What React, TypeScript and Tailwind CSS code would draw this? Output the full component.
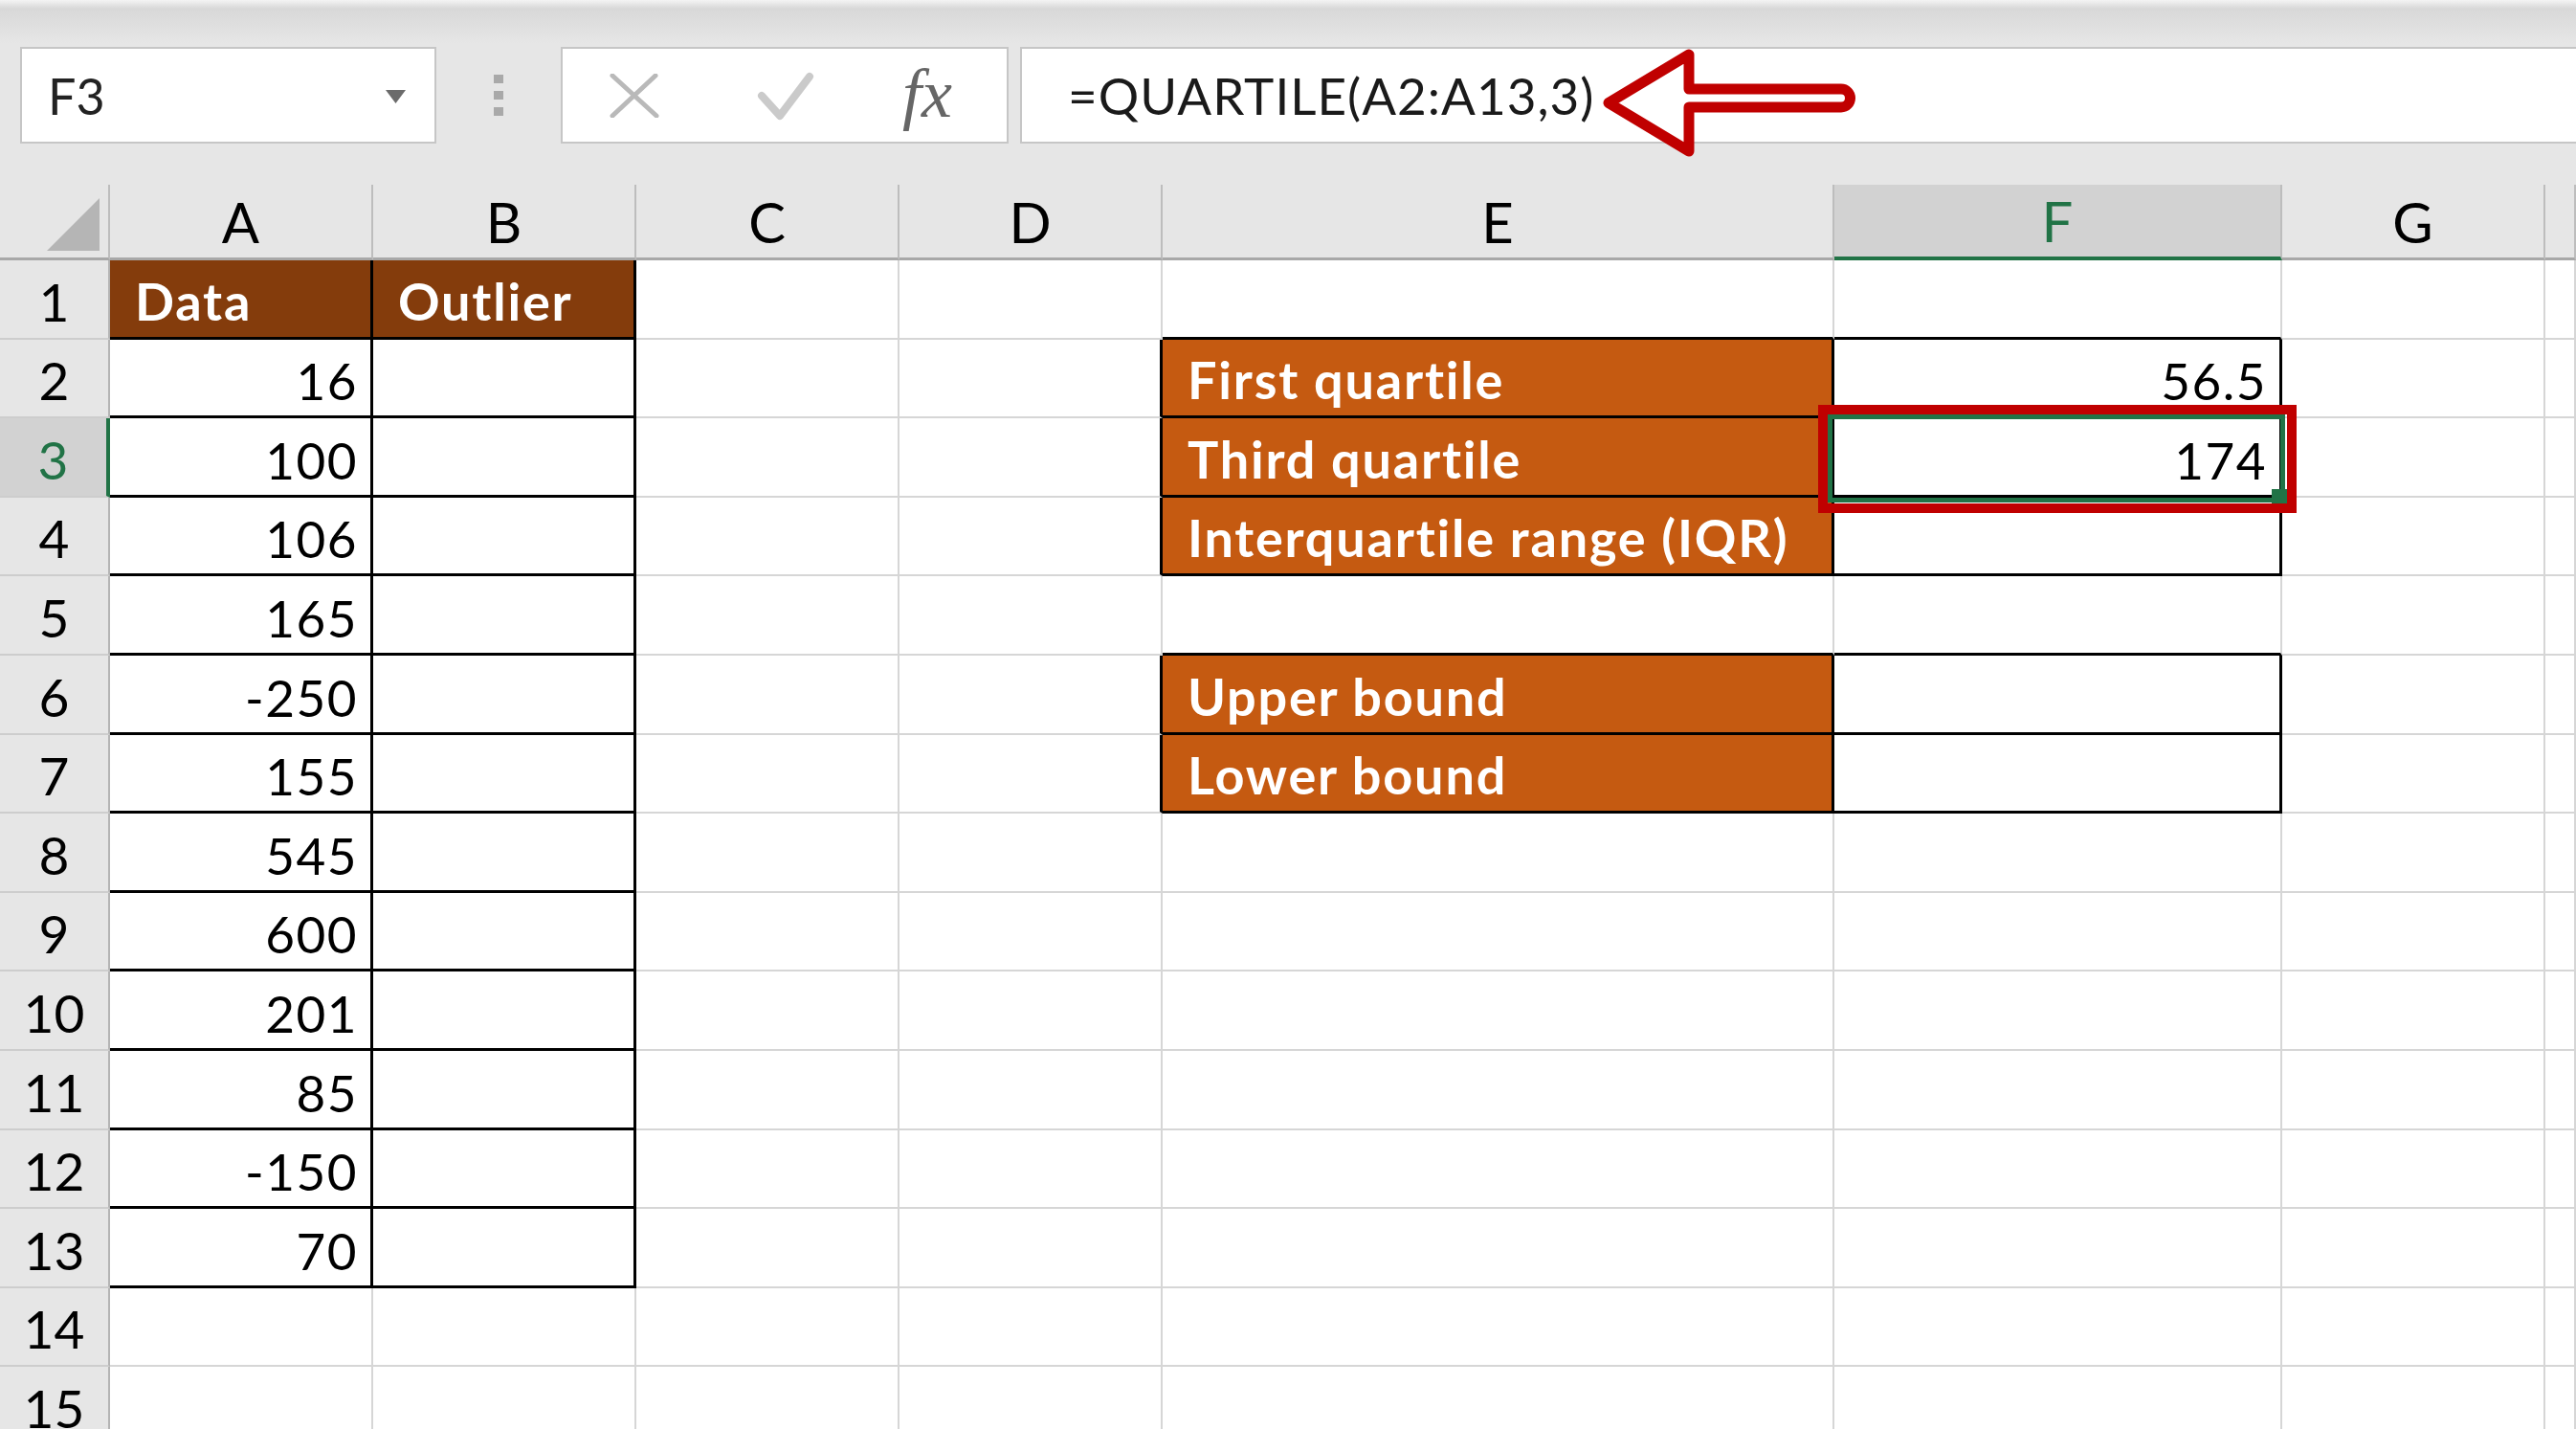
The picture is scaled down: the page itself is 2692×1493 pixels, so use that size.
import clsx from "clsx";

type Fill = "dark" | "orange";
type Cell = { v: string; fill?: Fill };

const COLS = ["A", "B", "C", "D", "E", "F", "G", ""];
const ROW_COUNT = 15;
// column F, row 3 is the active cell
const ACTIVE_COL = 5;
const ACTIVE_ROW = 3;

const cells: Record<string, Cell> = {
  A1: { v: "Data", fill: "dark" },
  B1: { v: "Outlier", fill: "dark" },
  E2: { v: "First quartile", fill: "orange" },
  F2: { v: "56.5" },
  E3: { v: "Third quartile", fill: "orange" },
  F3: { v: "174" },
  E4: { v: "Interquartile range (IQR)", fill: "orange" },
  E6: { v: "Upper bound", fill: "orange" },
  E7: { v: "Lower bound", fill: "orange" },
};
["16", "100", "106", "165", "-250", "155", "545", "600", "201", "85", "-150", "70"].forEach(
  (v, i) => {
    cells[`A${i + 2}`] = { v };
  },
);

// ranges that carry "all borders"
const inBox = (c: number, r: number) =>
  (c >= 0 && c <= 1 && r >= 1 && r <= 13) ||
  (c >= 4 && c <= 5 && r >= 2 && r <= 4) ||
  (c >= 4 && c <= 5 && r >= 6 && r <= 7);

const isNumber = (v: string) => /^-?[\d.]+$/.test(v);

function GridCell({ c, r }: { c: number; r: number }) {
  const cell = cells[`${COLS[c]}${r}`];
  const rightBlack = inBox(c, r) || inBox(c + 1, r);
  const bottomBlack = inBox(c, r) || inBox(c, r + 1);
  const numeric = cell ? isNumber(cell.v) : false;
  const active = c === ACTIVE_COL && r === ACTIVE_ROW;

  return (
    <div
      className={clsx(
        "flex items-end leading-none pb-[10px] whitespace-nowrap",
        active && "relative z-10",
        rightBlack ? "border-r-[3px] border-r-black" : "border-r-2 border-r-[#d6d6d6]",
        bottomBlack ? "border-b-[3px] border-b-black" : "border-b-2 border-b-[#d6d6d6]",
        numeric ? "justify-end pr-[13px] text-[53px] tracking-[1.5px]" : "justify-start pl-[26px]",
        cell?.fill === "dark" && "bg-[#843c0c] text-white font-bold text-[54px] tracking-[1.8px]",
        cell?.fill === "orange" && "bg-[#c55a11] text-white font-bold text-[54px] tracking-[1.8px]",
        !cell?.fill && "bg-white text-black",
      )}
    >
      {cell?.v}
      {active && (
        <>
          <div className="absolute left-[-7px] top-[-4px] w-[478px] h-[92px] border-[5px] border-[#217346]" />
          <div className="absolute left-[457px] top-[74px] w-[16px] h-[16px] bg-[#217346]" />
          <div className="absolute left-[-17px] top-[-14px] w-[500px] h-[113px] border-[10px] border-[#c00000]" />
        </>
      )}
    </div>
  );
}

function ColumnHeader({ label, index }: { label: string; index: number }) {
  const selected = index === ACTIVE_COL;
  return (
    <div
      className={clsx(
        "flex items-end justify-center text-[58px] leading-none pb-[8px] border-r-2 border-r-[#bdbdbd]",
        selected
          ? "bg-[#d2d2d2] text-[#217346] border-b-[4px] border-b-[#217346]"
          : "bg-[#e6e6e6] text-black border-b-[3px] border-b-[#a8a8a8]",
      )}
    >
      {label}
    </div>
  );
}

function RowHeader({ r }: { r: number }) {
  const selected = r === ACTIVE_ROW;
  return (
    <div
      className={clsx(
        "flex items-end justify-center text-[55px] leading-none pb-[10px] border-b-2 border-b-[#cdcdcd]",
        selected
          ? "bg-[#d2d2d2] text-[#217346] border-r-[4px] border-r-[#217346]"
          : "bg-[#e6e6e6] text-black border-r-2 border-r-[#b4b4b4]",
      )}
    >
      {r}
    </div>
  );
}

function FormulaArrow() {
  return (
    <svg
      className="absolute left-[1660px] top-[45px]"
      width="290"
      height="125"
      viewBox="0 0 290 125"
    >
      <path
        d="M21 62.5 L105 12 L105 48 L264 48 A9.5 9.5 0 0 1 264 67 L105 67 L105 113 Z"
        fill="white"
        stroke="#c00000"
        strokeWidth="11"
        strokeLinejoin="round"
      />
    </svg>
  );
}

function FormulaBar() {
  return (
    <div className="h-[193px] flex flex-col">
      <div className="h-[45px] bg-linear-to-b from-[#f4f4f4] via-[#d8d8d8] via-[20%] to-[#e6e6e6]" />
      <div className="mt-[4px] h-[101px] flex">
        {/* name box */}
        <div className="ml-[21px] w-[435px] shrink-0 bg-white border-2 border-[#c6c6c6] flex items-end justify-between pl-[27px] pr-[30px] pb-[22px] text-[52px] leading-none text-[#222]">
          <span>F3</span>
          <svg className="mb-[18px]" width="21" height="14" viewBox="0 0 21 14">
            <path d="M0 0 L21 0 L10.5 14 Z" fill="#6b6b6b" />
          </svg>
        </div>
        {/* grip dots */}
        <div className="w-[130px] shrink-0 flex flex-col items-center justify-center gap-[8px]">
          <span className="w-[10px] h-[9px] bg-[#a9a9a9]" />
          <span className="w-[10px] h-[9px] bg-[#a9a9a9]" />
          <span className="w-[10px] h-[9px] bg-[#a9a9a9]" />
        </div>
        {/* cancel / enter / insert function */}
        <div className="w-[468px] shrink-0 bg-white border-2 border-[#c6c6c6] flex items-center pl-[49px]">
          <svg width="52" height="46" viewBox="0 0 52 46">
            <path d="M3 2 L49 44 M48 2 L3 44" stroke="#b9b9b9" strokeWidth="5" strokeLinecap="round" />
          </svg>
          <svg className="ml-[102px]" width="60" height="52" viewBox="0 0 60 52">
            <path
              d="M5 26 L24 47 L55 6"
              stroke="#cacaca"
              strokeWidth="8"
              fill="none"
              strokeLinecap="round"
              strokeLinejoin="round"
            />
          </svg>
          <span className="ml-[92px] mt-[-4px] font-['Liberation_Serif',serif] italic text-[72px] leading-none text-[#666]">
            fx
          </span>
        </div>
        {/* formula input */}
        <div className="ml-[12px] w-[1640px] shrink-0 bg-white border-2 border-[#c6c6c6] flex items-end pl-[48px] pb-[22px] text-[53px] tracking-[1px] leading-none text-[#1a1a1a]">
          =QUARTILE(A2:A13,3)
        </div>
      </div>
    </div>
  );
}

export default function App() {
  const rows = Array.from({ length: ROW_COUNT }, (_, i) => i + 1);
  return (
    <div className="relative w-[2692px] h-[1493px] overflow-hidden bg-[#e6e6e6] font-['Lato',sans-serif]">
      <FormulaBar />
      <div className="grid grid-cols-[115px_275px_275px_275px_275px_702px_468px_275px_1fr] grid-rows-[79px_repeat(15,82.6px)]">
        <div className="relative bg-[#e6e6e6] border-r-2 border-r-[#bdbdbd] border-b-[3px] border-b-[#a8a8a8]">
          <svg className="absolute left-[49px] top-[14px]" width="56" height="56" viewBox="0 0 56 56">
            <path d="M55 0 L55 55 L0 55 Z" fill="#b5b5b5" />
          </svg>
        </div>
        {COLS.map((label, i) => (
          <ColumnHeader key={i} label={label} index={i} />
        ))}
        {rows.map((r) => [
          <RowHeader key={`h${r}`} r={r} />,
          ...COLS.map((_, c) => <GridCell key={`${c}-${r}`} c={c} r={r} />),
        ])}
      </div>
      <FormulaArrow />
    </div>
  );
}
